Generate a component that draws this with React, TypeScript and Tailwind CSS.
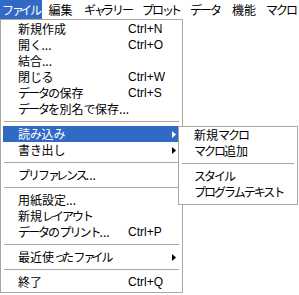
import React from "react";

const jp: React.CSSProperties = {
  fontFamily: '"Noto Sans CJK JP", sans-serif',
};

type Item =
  | { kind: "sep" }
  | { kind: "item"; label: string; shortcut?: string; sub?: boolean; active?: boolean };

const items: Item[] = [
  { kind: "item", label: "新規作成", shortcut: "Ctrl+N" },
  { kind: "item", label: "開く...", shortcut: "Ctrl+O" },
  { kind: "item", label: "結合..." },
  { kind: "item", label: "閉じる", shortcut: "Ctrl+W" },
  { kind: "item", label: "データの保存", shortcut: "Ctrl+S" },
  { kind: "item", label: "データを別名で保存..." },
  { kind: "sep" },
  { kind: "item", label: "読み込み", sub: true, active: true },
  { kind: "item", label: "書き出し", sub: true },
  { kind: "sep" },
  { kind: "item", label: "プリファレンス..." },
  { kind: "sep" },
  { kind: "item", label: "用紙設定..." },
  { kind: "item", label: "新規レイアウト" },
  { kind: "item", label: "データのプリント...", shortcut: "Ctrl+P" },
  { kind: "sep" },
  { kind: "item", label: "最近使ったファイル", sub: true },
  { kind: "sep" },
  { kind: "item", label: "終了", shortcut: "Ctrl+Q" },
];

const subItems: Item[] = [
  { kind: "item", label: "新規マクロ" },
  { kind: "item", label: "マクロ追加" },
  { kind: "sep" },
  { kind: "item", label: "スタイル" },
  { kind: "item", label: "プログラムテキスト" },
];

const bar = [
  { label: "ファイル", w: "w-[42px]", active: true },
  { label: "編集", w: "w-[37px]" },
  { label: "ギャラリー", w: "w-[58px]" },
  { label: "プロット", w: "w-[48px]" },
  { label: "データ", w: "w-[40px]" },
  { label: "機能", w: "w-[38px]" },
  { label: "マクロ", w: "w-[36px]" },
];

const SMALL = "ァィゥェォッャュョっゃゅょ";

function cls(ch: string): string {
  if (SMALL.includes(ch)) return "tracking-[-4px]";
  const c = ch.charCodeAt(0);
  if (c >= 0x30a0 && c <= 0x30ff) return "tracking-[-2px]";
  if (c >= 0x3040 && c <= 0x309f) return "tracking-[-0.5px]";
  return "";
}

function JText({ text }: { text: string }) {
  const runs: { c: string; t: string }[] = [];
  for (const ch of Array.from(text)) {
    const c = cls(ch);
    const last = runs[runs.length - 1];
    if (last && last.c === c) last.t += ch;
    else runs.push({ c, t: ch });
  }
  return (
    <span style={jp} className="whitespace-nowrap">
      {runs.map((r, i) => (
        <span key={i} className={r.c}>
          {r.t}
        </span>
      ))}
    </span>
  );
}

function Arrow({ white }: { white?: boolean }) {
  return (
    <svg width="4" height="7" viewBox="0 0 4 7" className="block">
      <path d="M0 0 L4 3.5 L0 7 Z" fill={white ? "#ffffff" : "#000000"} />
    </svg>
  );
}

function Sep() {
  return (
    <div className="h-[9px] flex items-center px-[1px]">
      <div className="h-px w-full bg-[#aca899]" />
    </div>
  );
}

export default function App() {
  return (
    <div className="relative w-[299px] h-[295px] bg-white overflow-hidden text-[12px] leading-[16px] text-black font-['Liberation_Sans',sans-serif]">
      <div className="flex h-[19px] bg-white">
        {bar.map((b) => (
          <div
            key={b.label}
            className={`${b.w} shrink-0 flex items-center justify-center ${
              b.active ? "bg-[#316ac5] text-white" : ""
            }`}
          >
            <JText text={b.label} />
          </div>
        ))}
      </div>

      <div className="absolute left-0 top-[19px] w-[183px] h-[274px] bg-white border border-[#aca899] px-[2px] pt-[1px] flex flex-col">
        {items.map((it, i) =>
          it.kind === "sep" ? (
            <Sep key={i} />
          ) : (
            <div
              key={i}
              className={`h-[16px] grid grid-cols-[110px_1fr_4px] items-center pl-[15px] pr-[4px] whitespace-nowrap ${
                it.active ? "bg-[#316ac5] text-white" : ""
              }`}
            >
              <JText text={it.label} />
              <span>{it.shortcut ?? ""}</span>
              <span>{it.sub ? <Arrow white={it.active} /> : null}</span>
            </div>
          )
        )}
      </div>

      <div className="absolute left-[178px] top-[126px] w-[120px] h-[79px] bg-white border border-[#aca899] px-[2px] flex flex-col">
        {subItems.map((it, i) =>
          it.kind === "sep" ? (
            <Sep key={i} />
          ) : (
            <div key={i} className="h-[16px] flex items-center pl-[13px]">
              <JText text={it.label} />
            </div>
          )
        )}
      </div>
    </div>
  );
}
